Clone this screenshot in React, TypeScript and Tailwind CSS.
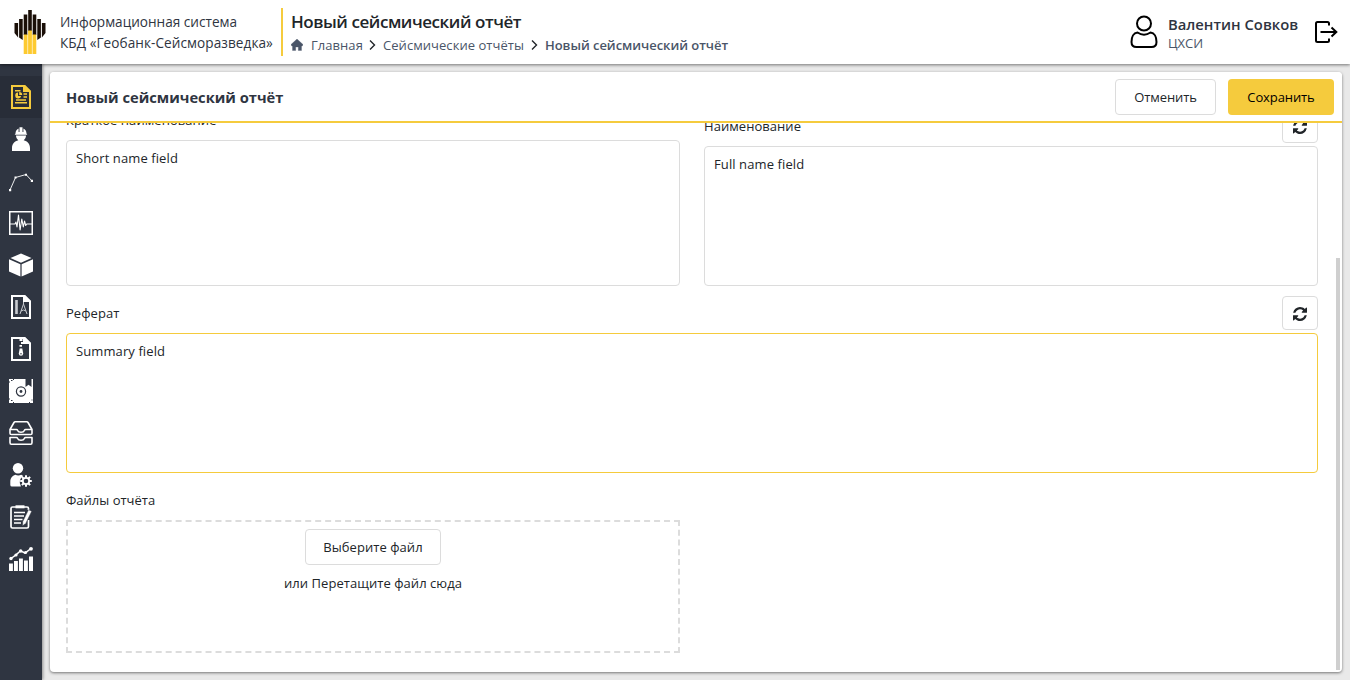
import React from "react";

function Logo() {
  return (
    <svg width="32" height="44" viewBox="0 0 32 44" className="shrink-0">
      <path
        fill="#1a0f08"
        d="M.5 13h3.600v14.500L.5 23z M5.100 9h3.600v21l-3.600-2.500z M9.700 4.500h3.600v20.500h-3.600z M14.200 0h3.600v21h-3.600z M18.700 4.500h3.600v20.500h-3.600z M23.300 9h3.600v18.500L23.300 30z M27.900 13h3.600v10l-3.600 4.500z"
      />
      <path fill="#fdca30" d="M9.700 24.500h3.800V44H9.700z M14.100 20.500h3.800V44h-3.800z M18.500 24.500h3.800V44h-3.800z" />
    </svg>
  );
}

function Icon({ children }: { children: React.ReactNode }) {
  return (
    <svg width="24" height="24" viewBox="0 0 24 24" fill="none" className="overflow-visible">
      {children}
    </svg>
  );
}

const gearTeeth = [0, 45, 90, 135, 180, 225, 270, 315];

const navIcons: { id: string; icon: React.ReactNode }[] = [
  {
    id: "reports",
    icon: (
      <Icon>
        <path d="M3 1h12.500L21 6.500V23H3z" stroke="#f5cb3d" strokeWidth="2" />
        <path d="M14 0h2l6 6v1h-8z" fill="#f5cb3d" />
        <path d="M6 5.700h5.500M14.500 9h3.500M14.500 12h3.500M7 15h10M6 17.700h12" stroke="#f5cb3d" strokeWidth="1.500" />
        <path d="M9 7.500a3 3 0 1 0 3.200 3.500H9z M10.200 7a3 3 0 0 1 3 3h-3z" fill="#f5cb3d" />
      </Icon>
    ),
  },
  {
    id: "crew",
    icon: (
      <Icon>
        <g fill="#fff">
          <path d="M6.500 6.500C6.500 4 8 2.200 9.600 1.500V5h.9V.3h3V5h.9V1.500C16 2.200 17.500 4 17.500 6.500l.8 1.300H5.700z" />
          <path d="M7 8.600h10c0 2.400-1 3.700-2.300 4.600C18.500 14 21 17 21 21v3H3v-3c0-4 2.500-7 6.300-7.800C8 12.300 7 11 7 8.600z" />
        </g>
      </Icon>
    ),
  },
  {
    id: "profile",
    icon: (
      <Icon>
        <path d="M1 21 6.500 8.500 17 5.500 23 12" stroke="#fff" strokeWidth=".9" />
        <path d="M0 20h2.200v2.200H0zM5.500 7.500h2v2h-2zM16 4.700h2v2h-2zM21.800 10.800H24V13h-2.200z" fill="#fff" />
      </Icon>
    ),
  },
  {
    id: "seismogram",
    icon: (
      <Icon>
        <path d="M.75.75h22.500v22.500H.75z" stroke="#fff" strokeWidth="1.500" />
        <path
          d="M1 13h5l1-2 1 5L9.500 4l1.600 15 1.700-11 1.500 8 1.200-6 1.200 4.500 1-1.500H23"
          stroke="#fff"
          strokeWidth="1.100"
          strokeLinejoin="round"
        />
      </Icon>
    ),
  },
  {
    id: "cube",
    icon: (
      <Icon>
        <path d="M12 .5 22.500 5 12 9.700 1.500 5zM0 6.300l11.400 5V23.500L0 18.500zM24 6.300l-11.400 5V23.500L24 18.500z" fill="#fff" />
      </Icon>
    ),
  },
  {
    id: "drawing",
    icon: (
      <Icon>
        <path d="M3 1h12.500L21 6.500V23H3z" stroke="#fff" strokeWidth="2" />
        <path d="M14 0h2l6 6v1h-8z" fill="#fff" />
        <path d="M6.200 5h2.600v14H6.200z" fill="#c8cbd0" />
        <path d="m11 19 3.500-10L18 19M12 16q2.500-2 5 0M14.500 7v2" stroke="#c8cbd0" />
      </Icon>
    ),
  },
  {
    id: "archive",
    icon: (
      <Icon>
        <path d="M3 1h12.500L21 6.500V23H3z" stroke="#fff" strokeWidth="2" />
        <path d="M14 0h2l6 6v1h-8z" fill="#fff" />
        <path d="M10.500 2h3v2h-3zM12 5h2v2h-2zM10.500 8h2.500v1.700h-2.500z" fill="#fff" />
        <path d="M10.700 11.500h2.600l.9 5a2.200 2.200 0 1 1-4.400 0z" fill="#fff" />
        <path d="M11.200 16.800h1.600" stroke="#2f3541" />
      </Icon>
    ),
  },
  {
    id: "safe",
    icon: (
      <Icon>
        <path d="M0 0h24v24H0z" fill="#fff" />
        <circle cx="12" cy="12.500" r="4.600" stroke="#2f3541" strokeWidth="1.200" />
        <circle cx="12" cy="12.500" r="1.400" fill="#2f3541" />
        <path d="M16.500 0h6v8l-3-2.200-3 2.200z" fill="#2f3541" />
        <path d="M0 3h1M2 1.500h1.500M4.500 0v1M0 20h1M2 21.500h1.500M4.500 23v1M20 23.500h1M22.500 21h1" stroke="#2f3541" />
      </Icon>
    ),
  },
  {
    id: "storage",
    icon: (
      <Icon>
        <g stroke="#fff" strokeWidth="1.600" strokeLinejoin="round">
          <path d="M1 8.500 5 1.500Q5.400.8 6.200.8h11.600q.8 0 1.200.7l4 7v3.700q0 1.300-1.300 1.300H2.300Q1 13.500 1 12.200zM1 8.500h6.500q.7 0 1 .8 1 2 3.500 2t3.500-2q.3-.8 1-.8H23" />
          <path d="M1 16.500h6.500q.7 0 1 .8 1 2 3.500 2t3.500-2q.3-.8 1-.8H23v5q0 1.700-1.300 1.700H2.300Q1 23.200 1 21.500z" />
        </g>
      </Icon>
    ),
  },
  {
    id: "users",
    icon: (
      <Icon>
        <g fill="#fff">
          <circle cx="9" cy="5.200" r="5.200" />
          <path d="M1.300 22v-3c0-4 2-6 5-7.200q3 1.400 6 0l2 1.200a7 7 0 0 0-2.500 9.800v.7H3Q1.300 23.500 1.300 22z" />
        </g>
        <circle cx="17" cy="18" r="3.200" stroke="#fff" strokeWidth="1.800" />
        {gearTeeth.map((a) => (
          <path key={a} d="M16 12.200h2v2.200h-2z" fill="#fff" transform={`rotate(${a} 17 18)`} />
        ))}
      </Icon>
    ),
  },
  {
    id: "journal",
    icon: (
      <Icon>
        <path
          d="M19.500 15v6.500q0 1.500-1.500 1.500H3.500Q2 23 2 21.500v-18Q2 2 3.500 2H18q1.500 0 1.500 1.500V5"
          stroke="#fff"
          strokeWidth="1.700"
        />
        <path d="M6.500.3h9v3h-9z" fill="#fff" />
        <path d="M5 7.500h11M5 11h10M5 14.500h8.500M5 18h7" stroke="#fff" strokeWidth="1.700" />
        <path d="m19.500 4.800 3.200 1.400-5.900 12-3.200 2.600.2-4.300z" fill="#fff" stroke="#2f3541" strokeWidth=".4" />
      </Icon>
    ),
  },
  {
    id: "statistics",
    icon: (
      <Icon>
        <path d="M0 16.500h3.900V24H0zM5 14h3.900v10H5zM10 11.500h3.900V24H10zM15 13.500h3.900V24H15zM20 9.500h4V24h-4z" fill="#fff" />
        <path d="m2 11.500 5-3.700 4.500-4L16 6l6-4.500" stroke="#fff" strokeWidth="1.500" />
        <g fill="#fff">
          <circle cx="2" cy="11.500" r="1.700" />
          <circle cx="7" cy="8" r="1.600" />
          <circle cx="11.700" cy="4" r="1.700" />
          <circle cx="16.500" cy="5.500" r="1.600" />
          <circle cx="22" cy="1.800" r="1.900" />
        </g>
      </Icon>
    ),
  },
];

function RefreshButton() {
  return (
    <button className="flex h-[34px] w-9 items-center justify-center rounded border border-[#dcdcdc] bg-white pt-px">
      <svg width="14" height="14" viewBox="0 0 1536 1536" fill="#212529">
        <path d="M1511 928q0 5-1 7-64 268-268 434.500T764 1536q-146 0-282.500-55T238 1324l-129 129q-19 19-45 19t-45-19-19-45V960q0-26 19-45t45-19h448q26 0 45 19t19 45-19 45l-137 137q71 66 161 102t187 36q134 0 250-65t186-179q11-17 53-117 8-23 30-23h192q13 0 22.500 9.500t9.500 22.500zm25-800v448q0 26-19 45t-45 19h-448q-26 0-45-19t-19-45 19-45l138-138Q969 256 768 256q-134 0-250 65T332 500q-11 17-53 117-8 23-30 23H50q-13 0-22.500-9.500T18 608v-7q65-268 270-434.500T768 0q146 0 284 55.500T1297 212l130-129q19-19 45-19t45 19 19 45z" />
      </svg>
    </button>
  );
}

function Chevron() {
  return (
    <svg width="8" height="12" viewBox="0 0 8 12" fill="none" stroke="#212529" strokeWidth="1.400" className="shrink-0">
      <path d="m1 1.500 4.500 4.500-4.500 4.500" />
    </svg>
  );
}

function Header() {
  return (
    <header className="z-20 flex h-16 shrink-0 bg-white shadow-[0_1px_3px_rgba(0,0,0,0.5)]">
      <div className="flex w-[281px] pt-[10px] pl-[14px]">
        <Logo />
        <div className="ml-[14px] pt-px text-[13.6px] leading-[21px] font-medium whitespace-nowrap text-[#2f3541]">
          <div>Информационная система</div>
          <div className="tracking-[0.06px]">КБД «Геобанк-Сейсморазведка»</div>
        </div>
      </div>
      <div className="mt-2 h-12 w-0.5 bg-[#f5cb3d]" />
      <div className="ml-2 flex-1 pt-[9px] whitespace-nowrap">
        <h1 className="text-[17px] leading-[26px] font-semibold tracking-[-0.44px] text-[#212529]">Новый сейсмический отчёт</h1>
        <nav className="flex h-5 items-center text-[13px] tracking-[0.05px] text-[#4a5568]">
          <svg width="12" height="12" viewBox="0 0 12 12" fill="#4a5568" className="shrink-0">
            <path d="M6 0 12 5.500 11.300 7H10.500v4.500H7.300V8H4.700v3.500H1.500V7H.7L0 5.500z" stroke="#4a5568" strokeWidth=".3" strokeLinejoin="round" />
          </svg>
          <span className="ml-2 w-[58px]">Главная</span>
          <Chevron />
          <span className="ml-[6px] w-[148px]">Сейсмические отчёты</span>
          <Chevron />
          <span className="ml-[6px] font-semibold tracking-[-0.04px]">Новый сейсмический отчёт</span>
        </nav>
      </div>
      <svg width="28" height="34" viewBox="0 0 28 34" fill="none" stroke="#000" strokeWidth="2" className="mt-[15px]">
        <circle cx="14" cy="8.500" r="7" />
        <path d="M7.500 17.500q6.500 4.500 13 0c4 .3 6 4.500 6 9.500q0 5-5 5h-15q-5 0-5-5c0-5 2-9.200 6-9.500z" strokeLinejoin="round" />
      </svg>
      <div className="ml-[10px] w-[147px] pt-[14px] whitespace-nowrap">
        <div className="text-[14.8px] leading-5 font-semibold text-[#2f3541]">Валентин Совков</div>
        <div className="text-[13px] leading-[19px] text-[#4a5568]">ЦХСИ</div>
      </div>
      <svg width="23" height="24" viewBox="0 0 23 24" fill="none" stroke="#000" strokeWidth="2" className="mt-5 mr-3">
        <path d="M14 5.500V3.500q0-1.500-1.500-1.500h-10Q1 2 1 3.500v17Q1 22 2.500 22h10q1.500 0 1.500-1.500v-2" />
        <path d="M5.500 12H21M16.500 7.500 21.300 12l-4.800 4.500" />
      </svg>
    </header>
  );
}

const fieldClass =
  "block w-full resize-none rounded border bg-white px-[9px] py-[7px] text-[13px] leading-5 tracking-[0.1px] text-[#212529] outline-none";

export default function App() {
  return (
    <div className="flex h-[680px] w-[1350px] flex-col overflow-hidden bg-[#e9e9e9] font-['Open_Sans','Noto_Sans',sans-serif] text-[13px] leading-5 text-[#212529]">
      <Header />
      <div className="flex min-h-0 flex-1">
        <aside className="z-10 w-[42px] shrink-0 bg-[#2f3541] pt-3 shadow-[1px_0_3px_rgba(0,0,0,0.4)]">
          {navIcons.map((item, i) => (
            <div key={item.id} className={`flex h-[42px] items-center justify-center ${i === 0 ? "bg-[#282d38]" : ""}`}>
              {item.icon}
            </div>
          ))}
        </aside>
        <main className="mx-2 my-2 flex min-w-0 flex-1 flex-col overflow-hidden rounded bg-white shadow-[0_1px_3px_rgba(0,0,0,0.5)]">
          <div className="z-10 flex h-[51px] shrink-0 items-center border-b-2 border-[#f5cb3d] bg-white pr-2 pl-4">
            <h2 className="flex-1 text-[14.700px] font-bold text-[#2f3541]">Новый сейсмический отчёт</h2>
            <button className="mt-[1px] h-9 w-[101px] rounded border border-[#dcdcdc] pb-px tracking-[-0.1px]">Отменить</button>
            <button className="mt-[1px] ml-3 h-9 w-[106px] rounded bg-[#f5cb3d] pb-px text-black tracking-[-0.1px]">Сохранить</button>
          </div>
          <div className="flex min-h-0 flex-1 overflow-hidden">
            <div className="-mt-[14px] ml-4 w-[1252px] shrink-0 tracking-[0.05px]">
              <div className="grid grid-cols-2 gap-6">
                <div className="pt-px">
                  <div className="mb-[10px]">Краткое наименование</div>
                  <textarea className={`${fieldClass} h-[146px] border-[#dcdcdc]`} defaultValue="Short name field" />
                </div>
                <div>
                  <div className="mb-[3px] flex h-[34px] items-center justify-between">
                    <span>Наименование</span>
                    <RefreshButton />
                  </div>
                  <textarea className={`${fieldClass} h-[140px] border-[#dcdcdc]`} defaultValue="Full name field" />
                </div>
              </div>
              <div className="mt-[10px] mb-[3px] flex h-[34px] items-center justify-between">
                <span>Реферат</span>
                <RefreshButton />
              </div>
              <textarea className={`${fieldClass} h-[140px] border-[#f5cb3d]`} defaultValue="Summary field" />
              <div className="mt-[17px] tracking-normal">Файлы отчёта</div>
              <div className="mt-[10px] flex h-[133px] w-[614px] flex-col items-center border-2 border-dashed border-[#dcdcdc] pt-[7px]">
                <button className="h-9 w-[136px] rounded border border-[#dcdcdc]">Выберите файл</button>
                <div className="mt-2">или Перетащите файл сюда</div>
              </div>
            </div>
            <div className="mt-[135px] mb-0.5 ml-[18px] w-1 bg-[#cfcfcf]" />
          </div>
        </main>
      </div>
    </div>
  );
}
